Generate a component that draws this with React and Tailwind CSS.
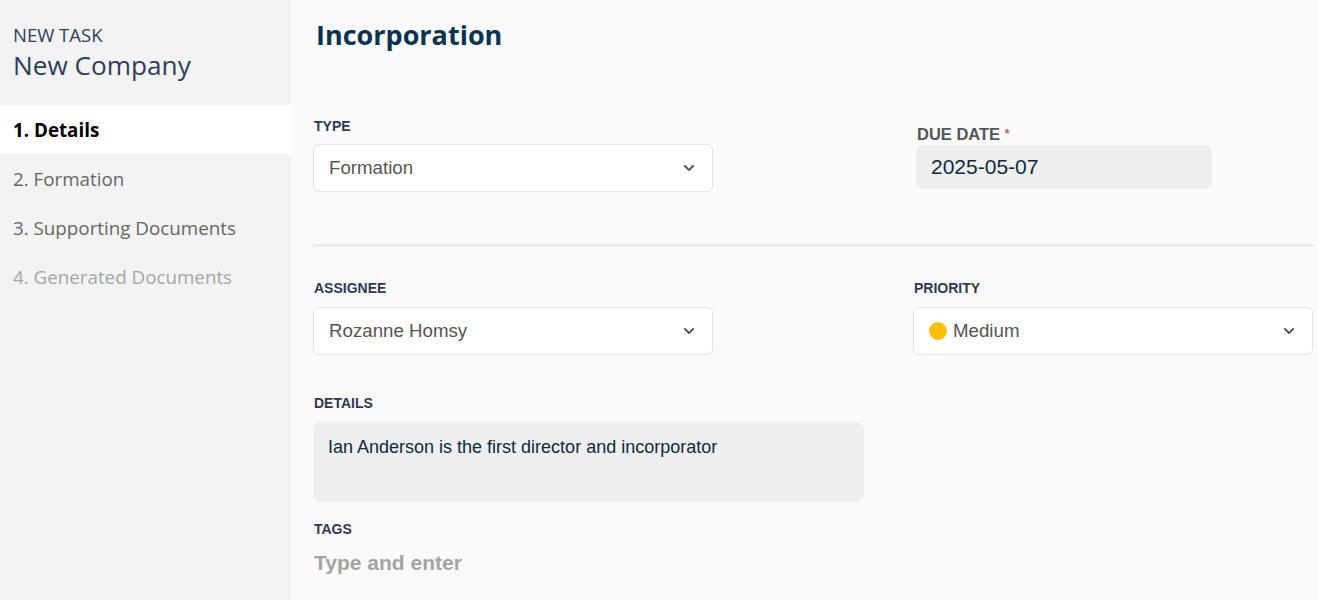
import React from "react";
import { FaChevronDown } from "react-icons/fa";

const sans = { fontFamily: '"Open Sans", sans-serif' };
const arial = { fontFamily: '"Liberation Sans", Arial, sans-serif' };

function Label({ children }) {
  return (
    <div className="h-[16px] leading-[16px] text-[14px] font-bold uppercase text-[#2e3a55] pl-[1px]" style={arial}>
      {children}
    </div>
  );
}

function Select({ children, className = "" }) {
  return (
    <div className={"h-[48px] w-[400px] bg-white border border-[#e4e4e4] rounded-[6px] flex items-center justify-between pl-[15px] pr-[17px] " + className}>
      <div className="flex items-center text-[18.7px] text-[#555555]" style={arial}>{children}</div>
      <FaChevronDown className="text-[#555555] w-[12px] h-[12px]" />
    </div>
  );
}

export default function App() {
  return (
    <div className="flex w-[1318px] h-[600px] overflow-hidden bg-[#fafafa]">
      <aside className="w-[291px] shrink-0 bg-[#f3f3f3] h-full" style={sans}>
        <div className="h-[105px] pl-[13px] pt-[23px]">
          <div className="text-[18.5px] leading-[24px] text-[#2e3e5c]">NEW TASK</div>
          <div className="text-[26.2px] leading-[36px] text-[#2e3e5c]">New Company</div>
        </div>
        <div className="h-[49px] bg-white flex items-center pl-[13px] pt-[2px] text-[18.8px] font-bold text-black">1. Details</div>
        <div className="h-[49px] flex items-center pl-[13px] pt-[2px] text-[18.8px] text-[#666666]">2. Formation</div>
        <div className="h-[49px] flex items-center pl-[13px] pt-[2px] text-[18.8px] text-[#666666]">3. Supporting Documents</div>
        <div className="h-[49px] flex items-center pl-[13px] pt-[2px] text-[18.8px] text-[#a6a6a6]">4. Generated Documents</div>
      </aside>
      <main className="flex-1 pl-[22px] pr-[5px]">
        <div className="h-[70px] flex items-center pl-[3px]">
          <h1 className="text-[27px] font-bold text-[#0b3350]" style={sans}>Incorporation</h1>
        </div>
        <div className="mt-[48px] flex justify-between">
          <div>
            <Label>Type</Label>
            <Select className="mt-[10px]">Formation</Select>
          </div>
          <div className="pt-[8px] pr-[101px] pl-[3px]">
            <div className="h-[16px] leading-[16px] text-[16.5px] font-bold text-[#555555] pl-[1px]" style={arial}>
              DUE DATE <span className="text-[#d9534f] text-[12px] align-top">*</span>
            </div>
            <div className="mt-[3px] h-[44px] w-[296px] bg-[#efefef] rounded-[8px] flex items-center pl-[15px] text-[21px] text-[#0b2b40]" style={arial}>
              2025-05-07
            </div>
          </div>
        </div>
        <div className="mt-[52px] h-[3px] bg-[#ececec]" />
        <div className="mt-[33px] flex justify-between">
          <div>
            <Label>Assignee</Label>
            <Select className="mt-[11px]">Rozanne Homsy</Select>
          </div>
          <div>
            <Label>Priority</Label>
            <Select className="mt-[11px]">
              <span className="w-[18px] h-[18px] rounded-full bg-[#ffc107] mr-[6px] inline-block" />
              Medium
            </Select>
          </div>
        </div>
        <div className="mt-[40px]">
          <Label>Details</Label>
          <div className="mt-[11px] h-[80px] w-[551px] bg-[#efefef] rounded-[8px] pl-[15px] pt-[15px] text-[18px] leading-[20px] text-[#0b2b40]" style={arial}>
            Ian Anderson is the first director and incorporator
          </div>
        </div>
        <div className="mt-[19px]">
          <Label>Tags</Label>
          <div className="mt-[10px] pl-[1px] text-[21px] font-bold text-[#a3a3a3]" style={arial}>Type and enter</div>
        </div>
      </main>
    </div>
  );
}
